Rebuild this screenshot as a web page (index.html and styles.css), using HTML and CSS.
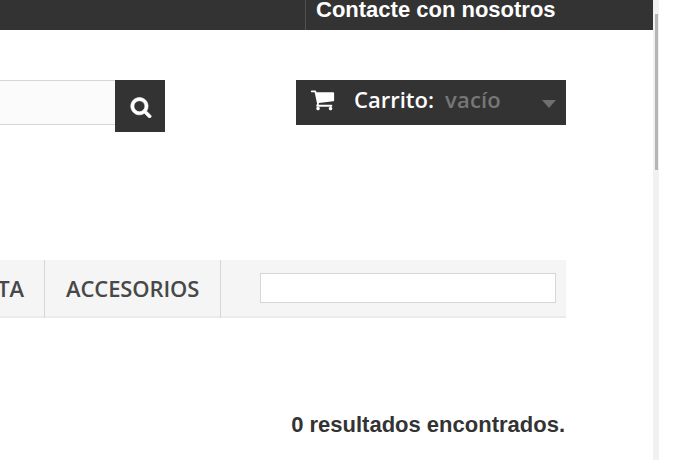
FILE: index.html
```html
<!DOCTYPE html>
<html lang="es">
<head>
<meta charset="utf-8">
<title>Tienda</title>
<link rel="stylesheet" href="styles.css">
</head>
<body>
<div class="page">
  <main class="main">
    <div class="topbar"><a class="contact">Contacte con nosotros</a></div>
    <div class="content">
      <div class="header">
        <div class="search">
          <div class="search-input"></div>
          <div class="search-btn">
            <svg class="search-icon" viewBox="0 0 1792 1792"><path fill="#fff" stroke="#fff" stroke-width="50" d="M1216 832q0-185-131.500-316.500t-316.500-131.500-316.500 131.500-131.500 316.500 131.500 316.500 316.500 131.500 316.500-131.500 131.500-316.500zm512 832q0 52-38 90t-90 38q-54 0-90-38l-343-342q-179 124-399 124-143 0-273.500-55.500t-225-150-150-225-55.500-273.500 55.500-273.500 150-225 225-150 273.500-55.500 273.500 55.500 225 150 150 225 55.500 273.500q0 220-124 399l343 343q37 37 37 90z"/></svg>
          </div>
        </div>
        <div class="cart">
          <svg class="cart-icon" viewBox="0 0 1792 1792"><path fill="#fff" d="M704 1536q0 52-38 90t-90 38-90-38-38-90 38-90 90-38 90 38 38 90zm896 0q0 52-38 90t-90 38-90-38-38-90 38-90 90-38 90 38 38 90zm128-1088v512q0 24-16.500 42.500t-40.500 21.500l-1044 122q13 60 13 70 0 16-24 64h920q26 0 45 19t19 45-19 45-45 19h-1024q-26 0-45-19t-19-45q0-11 8-31.500t16-36 21.500-40 15.500-29.500l-177-823h-204q-26 0-45-19t-19-45 19-45 45-19h256q16 0 28.500 6.500t19.500 15.500 13 24.500 8 26 5.500 29.500 4.500 26h1201q26 0 45 19t19 45z"/></svg>
          <span class="cart-label">Carrito:</span>
          <span class="cart-state">vacío</span>
          <span class="cart-caret"></span>
        </div>
      </div>
      <nav class="nav">
        <a class="nav-item nav-cut">TA</a>
        <a class="nav-item">ACCESORIOS</a>
        <div class="nav-search"><div class="nav-input"></div></div>
      </nav>
      <p class="results">0 resultados encontrados.</p>
    </div>
  </main>
  <div class="scrollbar"><div class="thumb"></div></div>
</div>
</body>
</html>
```
FILE: styles.css
```css
* { box-sizing: border-box; }
html, body { margin: 0; padding: 0; height: 100%; background: #fff; overflow: hidden; }
.page { display: flex; height: 470px; }
.main { width: 653px; flex: none; }
.topbar {
  height: 30px;
  background: #333;
  display: flex;
  justify-content: flex-end;
}
.contact {
  width: 348px;
  height: 30px;
  border-left: 1px solid #515151;
  padding-left: 10px;
  color: #fff;
  font: bold 22px/20px "Liberation Sans", Arial, sans-serif;
  white-space: nowrap;
}
.content { padding: 50px 87px 0 0; }
.header { display: flex; justify-content: space-between; align-items: flex-start; height: 180px; }
.search { display: flex; width: 165px; }
.search-input {
  width: 115px;
  height: 45px;
  background: #fbfbfb;
  border-top: 1px solid #d6d6d6;
  border-bottom: 1px solid #d6d6d6;
}
.search-btn {
  width: 50px;
  height: 52px;
  padding: 2px 0 0 1px;
  background: #333;
  display: flex;
  align-items: center;
  justify-content: center;
}
.search-icon { width: 22px; height: 22px; }
.cart {
  width: 270px;
  height: 45px;
  background: #333;
  display: flex;
  align-items: center;
  padding: 0 0 7px 14px;
  font-family: "Open Sans", sans-serif;
  font-size: 22px;
  font-weight: 600;
}
.cart-icon { width: 25px; height: 25px; flex: none; margin: 0 19px 0 0; }
.cart-label { color: #fff; margin-right: 10px; }
.cart-state { color: #777; margin-left: 1px; letter-spacing: 0.2px; }
.cart-caret {
  margin: 9px 10px 0 auto;
  border-left: 7px solid transparent;
  border-right: 7px solid transparent;
  border-top: 8px solid #6f6f6f;
}
.nav {
  display: flex;
  height: 58px;
  background: #f5f5f5;
  border-bottom: 2px solid #ebebeb;
}
.nav-item {
  height: 58px;
  border-right: 1px solid #d6d6d6;
  padding: 0 21px 0 21px;
  font: 600 22px/56px "Open Sans", sans-serif;
  letter-spacing: -0.1px;
  color: #484848;
  white-space: nowrap;
}
.nav-cut { width: 45px; padding: 0 20px 0 0; display: flex; justify-content: flex-end; }
.nav-search { flex: 1; display: flex; justify-content: flex-end; padding: 13px 10px 0 0; }
.nav-input { width: 296px; height: 30px; background: #fff; border: 1px solid #d6d6d6; }
.results {
  margin: 94px 0 0;
  padding-right: 1px;
  text-align: right;
  color: #333;
  font: bold 22px/26px "Liberation Sans", Arial, sans-serif;
}
.scrollbar { width: 6px; height: 460px; background: #f1f1f1; padding: 14px 1px 0 2px; }
.thumb { height: 156px; background: #b5b5b5; }
```
